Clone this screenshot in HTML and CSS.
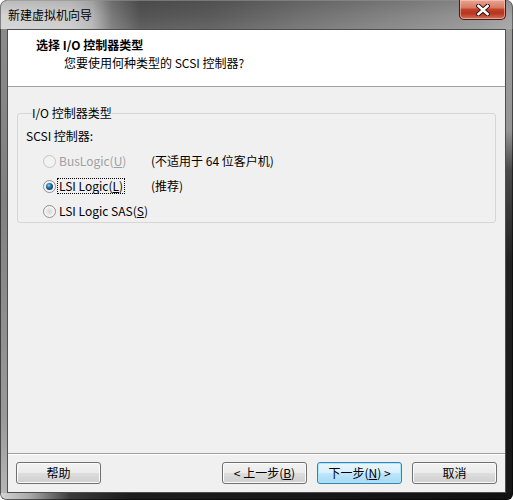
FILE: index.html
```html
<!DOCTYPE html>
<html lang="zh-CN">
<head>
<meta charset="utf-8">
<title>新建虚拟机向导</title>
<link rel="stylesheet" href="styles.css">
</head>
<body>
<div class="window">
  <div class="titlebar">
    <span class="title">新建虚拟机向导</span>
    <button class="close" aria-label="关闭">
      <svg width="14" height="12" viewBox="0 0 14 12">
        <path d="M2.5 2 L11.5 10 M11.5 2 L2.5 10" stroke="#3a1410" stroke-width="4.6" stroke-linecap="square" fill="none"/>
        <path d="M2.5 2 L11.5 10 M11.5 2 L2.5 10" stroke="#ffffff" stroke-width="2.6" stroke-linecap="square" fill="none"/>
      </svg>
    </button>
  </div>
  <div class="client">
    <div class="header">
      <div class="h-title">选择 I/O 控制器类型</div>
      <div class="h-sub">您要使用何种类型的 SCSI 控制器?</div>
    </div>
    <div class="body">
      <fieldset class="group">
        <legend>I/O 控制器类型</legend>
        <div class="group-label">SCSI 控制器:</div>
        <div class="options">
          <label class="opt disabled"><input type="radio" name="scsi" disabled><span class="opt-text">BusLogic(<u>U</u>)</span></label>
          <span class="note">(不适用于 64 位客户机)</span>
          <label class="opt"><input type="radio" name="scsi" checked><span class="opt-text focus">LSI Logic(<u>L</u>)</span></label>
          <span class="note">(推荐)</span>
          <label class="opt"><input type="radio" name="scsi"><span class="opt-text">LSI Logic SAS(<u>S</u>)</span></label>
          <span class="note"></span>
        </div>
      </fieldset>
    </div>
    <div class="footer">
      <button class="btn">帮助</button>
      <span class="spacer"></span>
      <button class="btn">&lt; 上一步(<u>B</u>)</button>
      <button class="btn default">下一步(<u>N</u>) &gt;</button>
      <button class="btn">取消</button>
    </div>
  </div>
</div>
</body>
</html>
```

FILE: styles.css
```css
* { box-sizing: border-box; }

html, body {
  margin: 0;
  padding: 0;
  background: #ffffff;
}

body {
  width: 513px;
  height: 500px;
  font-family: "Noto Sans CJK SC", "Noto Sans", sans-serif;
  font-size: 12px;
  line-height: 16px;
  color: #000;
}

.window {
  width: 513px;
  height: 500px;
  display: flex;
  flex-direction: column;
  padding: 0 7px 7px 7px;
  border-radius: 7px 7px 6px 6px;
  overflow: hidden;
  background:
    linear-gradient(to right, #d6d6d6 0, #a8a8a8 30px, #3a3a3a 70px, #1c1c1c 130px, #111 100%) bottom / 100% 7px no-repeat,
    linear-gradient(to bottom, #9e9e9e 0, #959595 130px, #4a4a4a 170px, #222 260px, #161616 100%) right / 7px 100% no-repeat,
    linear-gradient(to bottom, #8c8c8c 0, #808080 200px, #9a9a9a 420px, #b8b8b8 100%) left / 7px 100% no-repeat,
    #7a7a7a;
  box-shadow: inset 0 0 0 1px rgba(0,0,0,.55);
}

.titlebar {
  height: 29px;
  flex: none;
  display: flex;
  align-items: flex-start;
  margin: 0 -7px;
  padding-left: 8px;
  border-radius: 7px 7px 0 0;
  box-shadow: inset 0 1px 0 rgba(255,255,255,.35), inset 1px 0 0 rgba(0,0,0,.4), inset -1px 0 0 rgba(0,0,0,.4), inset 0 1px 0 rgba(0,0,0,.4);
  background:
    linear-gradient(to bottom, rgba(0,0,0,.12) 0, rgba(0,0,0,0) 16px, rgba(255,255,255,.08) 29px),
    linear-gradient(to right, #d4d4d4 0, #cbcbcb 70px, #b6b6b6 92px, #7a7a7a 112px, #545454 140px, #5a5a5a 210px, #707070 300px, #858585 400px, #979797 480px, #a4a4a4 513px);
}

.title {
  margin-top: 7px;
  font-size: 12px;
  line-height: 16px;
  color: #000;
  white-space: nowrap;
}

.close {
  margin-left: auto;
  margin-right: 7px;
  width: 47px;
  height: 20px;
  padding: 0;
  display: flex;
  align-items: center;
  justify-content: center;
  border: 1px solid #4a1a12;
  border-top: none;
  border-radius: 0 0 5px 5px;
  background: linear-gradient(to bottom, #e8a493 0, #d77a63 40%, #c2412a 50%, #b7341f 70%, #d0735b 100%);
  box-shadow: inset 0 0 0 1px rgba(255,210,200,.55);
}

.client {
  flex: 1;
  display: flex;
  flex-direction: column;
  border: 1px solid #4e4e4e;
  background: #f0f0f0;
}

.header {
  height: 57px;
  flex: none;
  background: #fff;
  border-bottom: 1px solid #a0a0a0;
  padding: 7px 0 0 28px;
}

.h-title {
  font-weight: bold;
}

.h-sub {
  margin-top: 2px;
  padding-left: 28px;
}

.body {
  flex: 1;
  padding: 18px 0 0 9px;
}

.group {
  margin: 0;
  width: 479px;
  padding: 7px 0 3px 8px;
  border: 1px solid #d6d6d6;
  border-radius: 3px;
}

.group legend {
  margin-left: 6px;
  padding: 0;
  line-height: 16px;
}

.options {
  margin-top: 9px;
  margin-left: 17px;
  display: grid;
  grid-template-columns: 108px auto;
  row-gap: 9px;
  align-items: center;
}

.opt {
  display: flex;
  align-items: center;
  height: 16px;
}

.opt input {
  -webkit-appearance: none;
  appearance: none;
  width: 13px;
  height: 13px;
  margin: 0 1px 0 0;
  border-radius: 50%;
  border: 1px solid #8e8f8f;
  background: radial-gradient(circle at 50% 50%, #d6d6d6 0, #e9e9e9 3px, #f6f6f6 5px, #ffffff 6px);
  position: relative;
}

.opt input:checked::after {
  content: "";
  position: absolute;
  left: 2px;
  top: 2px;
  width: 7px;
  height: 7px;
  border-radius: 50%;
  background: radial-gradient(circle at 40% 35%, #9bd4f5 0, #3c8fc7 1.5px, #1c5d8f 3px, #174e7a 4px);
}

.opt.disabled input {
  border-color: #c5c5c5;
  background: #f2f2f2;
}

.opt-text {
  display: inline-block;
  line-height: 14px;
  padding: 0 1px;
  border: 1px solid transparent;
  white-space: nowrap;
}

.opt-text.focus {
  border: 1px dotted #000;
}

.opt.disabled .opt-text {
  color: #a0a0a0;
}

.note {
  white-space: nowrap;
}

.footer {
  flex: none;
  display: flex;
  align-items: center;
  gap: 10px;
  padding: 8px 8px 8px 8px;
  border-top: 1px solid #a0a0a0;
  box-shadow: inset 0 1px 0 #fff;
}

.spacer {
  flex: 1;
}

.btn {
  width: 85px;
  height: 22px;
  padding: 0;
  font-family: inherit;
  font-size: 12px;
  line-height: 16px;
  color: #000;
  border: 1px solid #707070;
  border-radius: 3px;
  background: linear-gradient(to bottom, #f2f2f2 0, #ebebeb 48%, #dddddd 52%, #cfcfcf 100%);
  box-shadow: inset 0 0 0 1px #fbfbfb;
}

.btn.default {
  border-color: #3c7fb1;
  background: linear-gradient(to bottom, #eaf6fd 0, #d9f0fc 48%, #bee6fd 52%, #a7d9f5 100%);
  box-shadow: inset 0 0 0 1px #a8e8ff;
}
```
